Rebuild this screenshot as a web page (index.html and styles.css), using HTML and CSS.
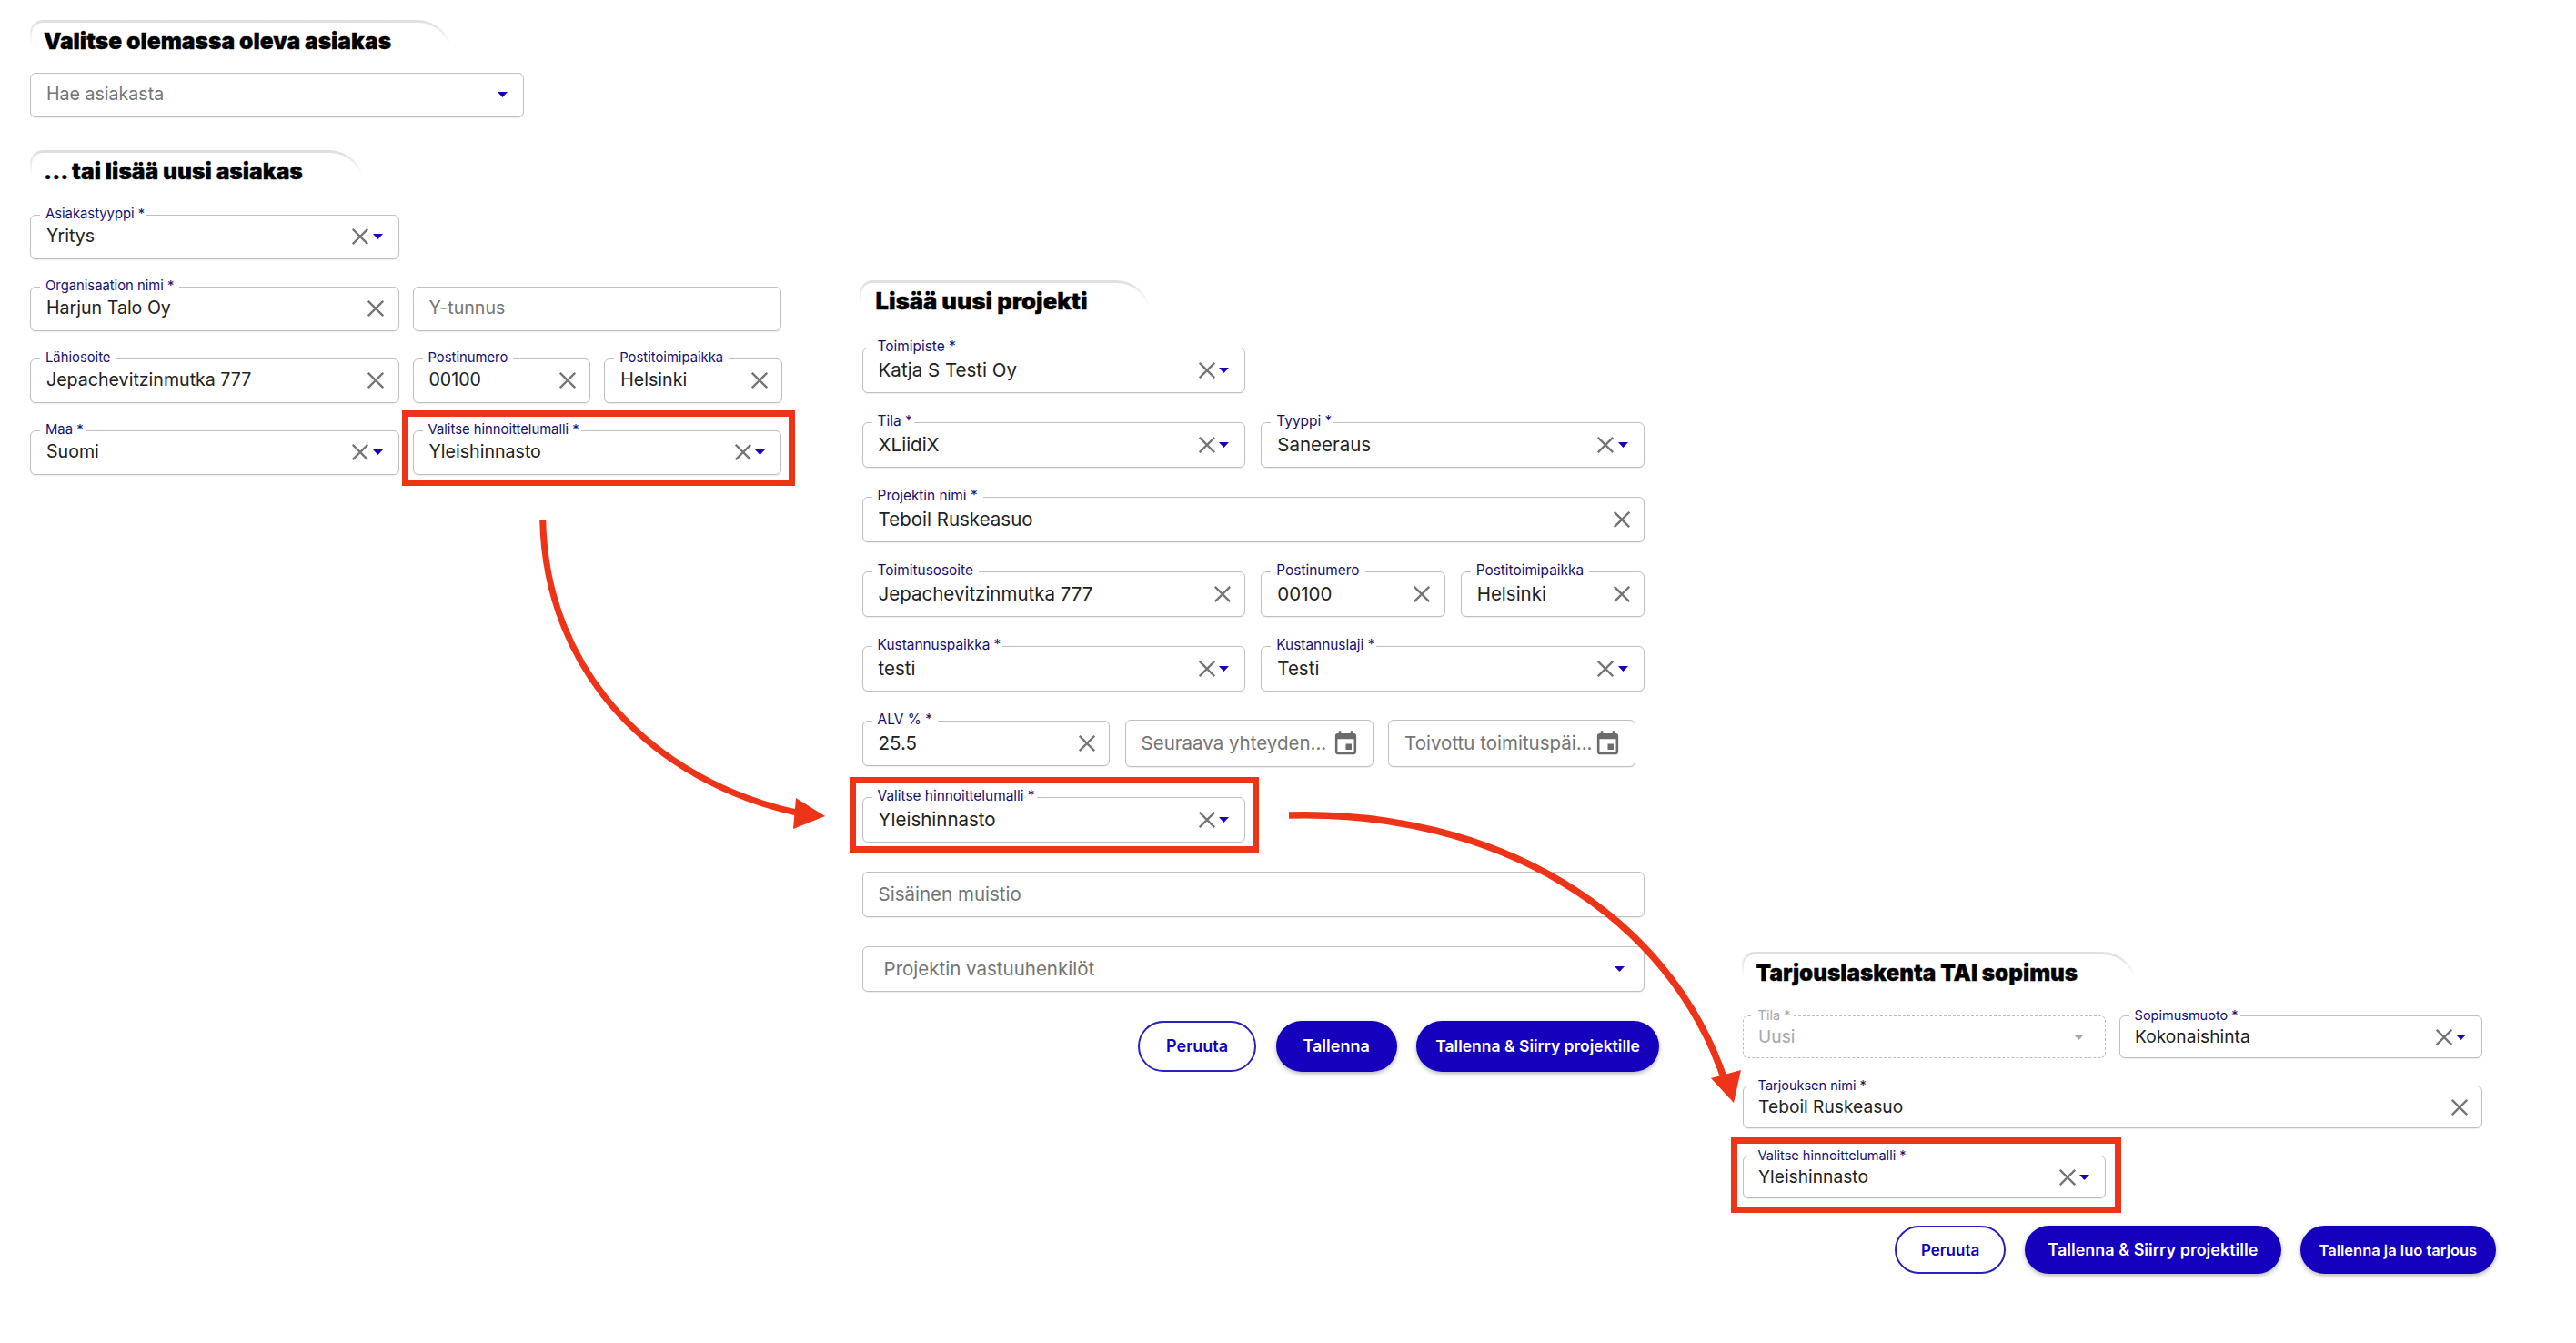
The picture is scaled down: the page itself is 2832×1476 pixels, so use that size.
FILE: index.html
```html
<!DOCTYPE html>
<html lang="fi">
<head>
<meta charset="utf-8">
<title>Hinnoittelumalli</title>
<link rel="stylesheet" href="styles.css">
</head>
<body>
<svg class="defs" aria-hidden="true">
  <symbol id="i-x" viewBox="0 0 18 18"><path d="M.8.8 17.2 17.2M17.2.8.8 17.2" fill="none" stroke="currentColor" stroke-width="2.3"/></symbol>
  <symbol id="i-caret" viewBox="0 0 11 6"><path d="M0 0H11L5.5 6Z" fill="currentColor"/></symbol>
  <symbol id="i-cal" viewBox="0 0 24 24"><path d="M17 12h-5v5h5v-5zM16 1v2H8V1H6v2H5c-1.11 0-1.99.9-1.99 2L3 19c0 1.1.89 2 2 2h14c1.1 0 2-.9 2-2V5c0-1.1-.9-2-2-2h-1V1h-2zm3 18H5V8h14v11z" fill="currentColor"/></symbol>
</svg>
<main class="canvas">

  <section class="panel p1">
    <div class="tab"><h2 class="tab-in">Valitse olemassa oleva asiakas</h2></div>
    <div class="row r-search">
      <div class="field"><span class="val ph">Hae asiakasta</span><svg class="caret"><use href="#i-caret"/></svg></div>
    </div>
    <div class="tab tab-next"><h2 class="tab-in">... tai lisää uusi asiakas</h2></div>
    <div class="stack">
      <div class="row r-half">
        <div class="field"><label class="lbl tight">Asiakastyyppi *</label><span class="val">Yritys</span><svg class="x"><use href="#i-x"/></svg><svg class="caret"><use href="#i-caret"/></svg></div>
      </div>
      <div class="row r-half">
        <div class="field"><label class="lbl">Organisaation nimi *</label><span class="val">Harjun Talo Oy</span><svg class="x"><use href="#i-x"/></svg></div>
        <div class="field"><span class="val ph">Y-tunnus</span></div>
      </div>
      <div class="row r-addr">
        <div class="field"><label class="lbl">Lähiosoite</label><span class="val">Jepachevitzinmutka 777</span><svg class="x"><use href="#i-x"/></svg></div>
        <div class="field"><label class="lbl">Postinumero</label><span class="val">00100</span><svg class="x"><use href="#i-x"/></svg></div>
        <div class="field"><label class="lbl">Postitoimipaikka</label><span class="val">Helsinki</span><svg class="x"><use href="#i-x"/></svg></div>
      </div>
      <div class="row r-half">
        <div class="field"><label class="lbl tight">Maa *</label><span class="val">Suomi</span><svg class="x"><use href="#i-x"/></svg><svg class="caret"><use href="#i-caret"/></svg></div>
        <div class="field"><label class="lbl tight">Valitse hinnoittelumalli *</label><span class="val">Yleishinnasto</span><svg class="x"><use href="#i-x"/></svg><svg class="caret"><use href="#i-caret"/></svg></div>
      </div>
    </div>
  </section>

  <section class="panel p2">
    <div class="tab"><h2 class="tab-in">Lisää uusi projekti</h2></div>
    <div class="stack">
      <div class="row r-half">
        <div class="field"><label class="lbl tight">Toimipiste *</label><span class="val">Katja S Testi Oy</span><svg class="x"><use href="#i-x"/></svg><svg class="caret"><use href="#i-caret"/></svg></div>
      </div>
      <div class="row r-half">
        <div class="field"><label class="lbl tight">Tila *</label><span class="val">XLiidiX</span><svg class="x"><use href="#i-x"/></svg><svg class="caret"><use href="#i-caret"/></svg></div>
        <div class="field"><label class="lbl tight">Tyyppi *</label><span class="val">Saneeraus</span><svg class="x"><use href="#i-x"/></svg><svg class="caret"><use href="#i-caret"/></svg></div>
      </div>
      <div class="row">
        <div class="field"><label class="lbl">Projektin nimi *</label><span class="val">Teboil Ruskeasuo</span><svg class="x"><use href="#i-x"/></svg></div>
      </div>
      <div class="row r-addr">
        <div class="field"><label class="lbl">Toimitusosoite</label><span class="val">Jepachevitzinmutka 777</span><svg class="x"><use href="#i-x"/></svg></div>
        <div class="field"><label class="lbl">Postinumero</label><span class="val">00100</span><svg class="x"><use href="#i-x"/></svg></div>
        <div class="field"><label class="lbl">Postitoimipaikka</label><span class="val">Helsinki</span><svg class="x"><use href="#i-x"/></svg></div>
      </div>
      <div class="row r-half">
        <div class="field"><label class="lbl tight">Kustannuspaikka *</label><span class="val">testi</span><svg class="x"><use href="#i-x"/></svg><svg class="caret"><use href="#i-caret"/></svg></div>
        <div class="field"><label class="lbl tight">Kustannuslaji *</label><span class="val">Testi</span><svg class="x"><use href="#i-x"/></svg><svg class="caret"><use href="#i-caret"/></svg></div>
      </div>
      <div class="row r-dates">
        <div class="field"><label class="lbl">ALV % *</label><span class="val">25.5</span><svg class="x"><use href="#i-x"/></svg></div>
        <div class="field date"><span class="val ph">Seuraava yhteyden...</span><svg class="cal"><use href="#i-cal"/></svg></div>
        <div class="field date"><span class="val ph">Toivottu toimituspäi...</span><svg class="cal"><use href="#i-cal"/></svg></div>
      </div>
      <div class="row r-half">
        <div class="field"><label class="lbl tight">Valitse hinnoittelumalli *</label><span class="val">Yleishinnasto</span><svg class="x"><use href="#i-x"/></svg><svg class="caret"><use href="#i-caret"/></svg></div>
      </div>
      <div class="row">
        <div class="field"><span class="val ph">Sisäinen muistio</span></div>
      </div>
      <div class="row">
        <div class="field wide-pad"><span class="val ph">Projektin vastuuhenkilöt</span><svg class="caret"><use href="#i-caret"/></svg></div>
      </div>
      <div class="actions">
        <button class="btn ghost b-cancel">Peruuta</button>
        <button class="btn b-save">Tallenna</button>
        <button class="btn b-go">Tallenna &amp; Siirry projektille</button>
      </div>
    </div>
  </section>

  <section class="panel p3">
    <div class="tab"><h2 class="tab-in">Tarjouslaskenta TAI sopimus</h2></div>
    <div class="stack">
      <div class="row r-half">
        <div class="field off"><label class="lbl tight">Tila *</label><span class="val">Uusi</span><svg class="caret"><use href="#i-caret"/></svg></div>
        <div class="field"><label class="lbl tight">Sopimusmuoto *</label><span class="val">Kokonaishinta</span><svg class="x"><use href="#i-x"/></svg><svg class="caret"><use href="#i-caret"/></svg></div>
      </div>
      <div class="row">
        <div class="field"><label class="lbl">Tarjouksen nimi *</label><span class="val">Teboil Ruskeasuo</span><svg class="x"><use href="#i-x"/></svg></div>
      </div>
      <div class="row r-half">
        <div class="field"><label class="lbl tight">Valitse hinnoittelumalli *</label><span class="val">Yleishinnasto</span><svg class="x"><use href="#i-x"/></svg><svg class="caret"><use href="#i-caret"/></svg></div>
      </div>
      <div class="actions">
        <button class="btn ghost b-cancel">Peruuta</button>
        <button class="btn b-go">Tallenna &amp; Siirry projektille</button>
        <button class="btn b-offer">Tallenna ja luo tarjous</button>
      </div>
    </div>
  </section>

  <div class="mark m1"></div>
  <div class="mark m2"></div>
  <div class="mark m3"></div>

  <svg class="arrows" viewBox="0 0 2832 1476" aria-hidden="true">
    <path class="a1" d="M596.7 571C600 740 720 860 880 894"/>
    <path class="head" d="M907 897 875 877 872 911Z"/>
    <path class="a2" d="M1417 896C1640 890 1835 1000 1897 1190"/>
    <path class="head" d="M1906 1212 1881 1185 1914 1176Z"/>
  </svg>
</main>
</body>
</html>
```

FILE: styles.css
```css
* { box-sizing: border-box; }
html, body { margin: 0; background: #fff; }
body { font-family: Inter, "Noto Sans", sans-serif; color: #222; }
.defs { position: absolute; width: 0; height: 0; }

.canvas { position: relative; width: 2832px; height: 1476px; overflow: hidden; }
.panel { position: absolute; }
.p1 { left: 33px; top: 21.5px; width: 827px; --h: 49px; --gap: 30px; --col: 15px; --fs: 19.6px; --lfs: 14.8px; --pad: 17px; --hfs: 24.6px; --tab-l: 15px; --tab-r: 65px; --first: 33px; --half: 405.5px; }
.p2 { left: 947.6px; top: 308px; width: 860.5px; --h: 50px; --gap: 32px; --col: 17px; --fs: 20.5px; --lfs: 15.4px; --pad: 17px; --hfs: 25.6px; --tab-l: 18px; --tab-r: 67px; --first: 36px; --half: 421.7px; }
.p3 { left: 1915.6px; top: 1046px; width: 813px; --h: 47px; --gap: 30px; --col: 15px; --fs: 19.2px; --lfs: 14.5px; --pad: 16.5px; --hfs: 24.3px; --tab-l: 16px; --tab-r: 63px; --first: 32px; --half: 399px; }

.tab { display: inline-block; vertical-align: top; padding: 3px 2px 0; border-radius: 16px 42px 0 0; background: linear-gradient(#dedede, #fff 75%); }
.p2 .tab { margin-left: -3px; }
.p3 .tab { margin-left: -1px; }
.tab-in { margin: 0; height: 35px; padding: 2px var(--tab-r) 0 calc(var(--tab-l) - 2px); background: #fff; border-radius: 14px 40px 0 0; font-size: var(--hfs); line-height: 36px; font-weight: 900; color: #000; white-space: nowrap; -webkit-text-stroke: .3px #000; }
.tab-next { margin-top: 36px; }

.r-search { width: 543px; margin-top: 20px; }
.stack { display: flex; flex-direction: column; gap: var(--gap); margin-top: var(--first); }
.row { display: grid; grid-template-columns: 1fr; column-gap: var(--col); }
.r-half { grid-template-columns: var(--half) var(--half); }
.r-addr { grid-template-columns: var(--half) 1fr 1fr; }
.r-dates { grid-template-columns: 272.5px 273px 272px; column-gap: 16.5px; }

.field { position: relative; display: flex; align-items: center; height: var(--h); padding: 0 var(--pad); background: #fff; border: 1.5px solid #bfbfbf; border-radius: 6px; box-shadow: 0 1px 1px rgba(0, 0, 0, .07); }
.date { height: calc(var(--h) + 2px); margin: -1px 0 .8px; padding-right: 16px; }
.wide-pad { padding: 0 21px 0 23px; }
.val { flex: 1; min-width: 0; font-size: var(--fs); line-height: 1.2; white-space: nowrap; color: #222; }
.ph { color: #757575; }
.lbl { position: absolute; left: 10px; top: calc(var(--lfs) * -.62); padding: 0 6px; background: #fff; font-size: var(--lfs); line-height: 1.1; color: #16106e; white-space: nowrap; }
.tight { padding-right: 2px; }
.x { flex: none; width: 18px; height: 18px; color: #757575; }
.x:last-child { margin-right: -1.5px; }
.caret { flex: none; width: 11px; height: 6px; margin-left: 4.5px; color: #1a00b8; }
.cal { flex: none; width: 31px; height: 31px; color: #6b6b6b; margin-right: -2px; }

.off { border: 1.5px dashed #bdbdbd; box-shadow: none; }
.off .val, .off .lbl { color: #a8a8a8; }
.off .caret { color: #a8a8a8; margin-right: 6px; }

.actions { display: flex; justify-content: flex-end; align-items: stretch; gap: 21px; }
.p2 .actions { margin-right: -16px; height: 56px; gap: 21.5px; }
.p3 .actions { margin-right: -15.5px; height: 53px; gap: 20.5px; }
.btn { display: block; height: 100%; padding: 0; border: 0; border-radius: 28px; background: #1500bd; color: #fff; font-family: inherit; font-size: 18px; font-weight: 600; white-space: nowrap; box-shadow: 0 2px 5px rgba(0, 0, 0, .3); }
.ghost { background: #fff; color: #1500bd; border: 2.5px solid #2a1fc0; box-shadow: none; }
.p2 .b-cancel { width: 130px; }
.b-save { width: 133px; }
.p2 .b-go { width: 267px; font-size: 17.5px; }
.p3 .b-cancel { width: 122px; font-size: 17px; }
.p3 .b-go { width: 282.5px; font-size: 18px; }
.b-offer { width: 215.5px; font-size: 16.5px; }

.mark { position: absolute; border: 7px solid #ee3418; }
.m1 { left: 442px; top: 451px; width: 432px; height: 83px; }
.m2 { left: 934px; top: 854px; width: 450px; height: 82.5px; }
.m3 { left: 1903px; top: 1250px; width: 429px; height: 82.5px; }

.arrows { position: absolute; left: 0; top: 0; width: 2832px; height: 1476px; pointer-events: none; }
.a1, .a2 { fill: none; stroke: #ee3418; }
.a1 { stroke-width: 7; }
.a2 { stroke-width: 7.5; }
.head { fill: #ee3418; }
```
